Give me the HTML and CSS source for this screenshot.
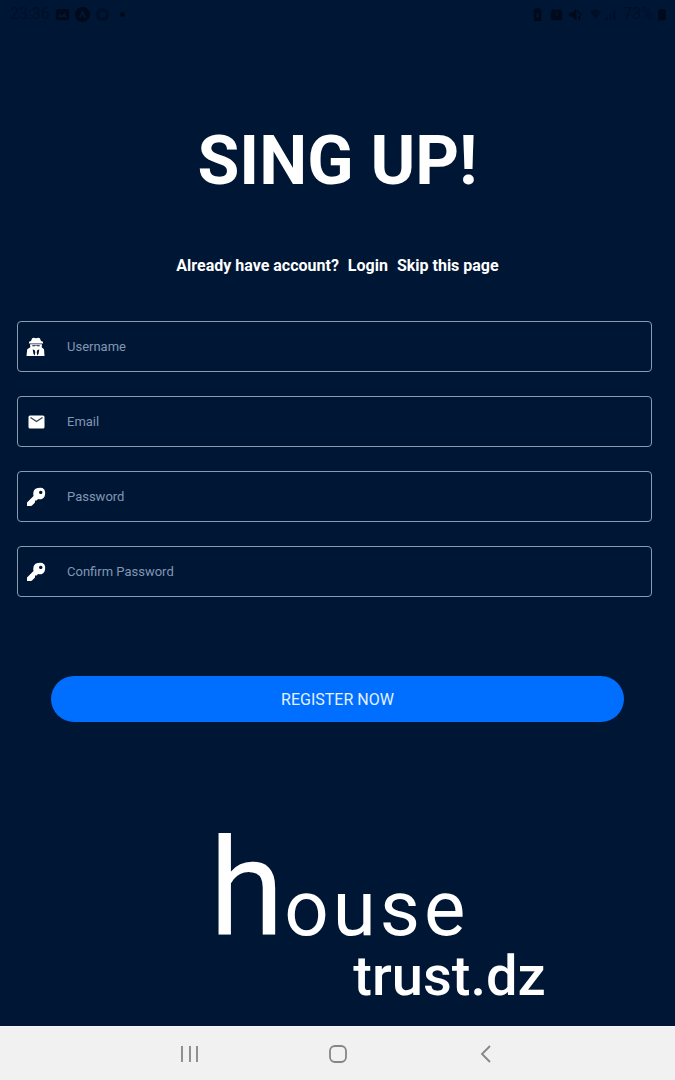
FILE: index.html
```html
<!DOCTYPE html>
<html lang="en">
<head>
<meta charset="utf-8">
<meta name="viewport" content="width=device-width, initial-scale=1">
<title>Sign up</title>
<link rel="stylesheet" href="styles.css">
</head>
<body>
<div class="screen">
  <header class="status">
    <div class="status-group">
      <span>23:36</span>
      <svg class="status-icon" viewBox="0 0 16 16"><path fill-rule="evenodd" d="M3 2h10a2 2 0 0 1 2 2v8a2 2 0 0 1-2 2H3a2 2 0 0 1-2-2V4a2 2 0 0 1 2-2zm0 9h10L10 6 7 9 5 7z"/></svg>
      <svg class="status-icon" viewBox="0 0 16 16"><path fill-rule="evenodd" d="M8 0a8 8 0 1 1 0 16A8 8 0 0 1 8 0zM4 11l2 1 2-4 2 4 2-1-4-8z"/></svg>
      <svg class="status-icon faint" viewBox="0 0 16 16"><path fill-rule="evenodd" d="M8 1a7 7 0 1 1 0 14A7 7 0 0 1 8 1zM5 5v6h6V5z"/></svg>
      <span class="status-dot"></span>
    </div>
    <div class="status-group status-right">
      <svg class="status-icon" viewBox="0 0 16 16"><path fill-rule="evenodd" d="M6 1h4v1h2v13H4V2h2zm0 10h4L8 5z"/></svg>
      <svg class="status-icon" viewBox="0 0 16 16"><path fill-rule="evenodd" d="M4 2l2 1h4l2-1 2 3v8l-2 1H4l-2-1V5zm3 3v4h3V8H8V5z"/></svg>
      <svg class="status-icon" viewBox="0 0 16 16"><path d="M1 6h3l5-4v12l-5-4H1zM10 3l5 5-1 1-4-4zM11 10l2-1v4l-2 1z"/></svg>
      <svg class="status-icon signal" viewBox="0 0 32 16"><path d="M2 5q6-4 12 0l-6 8zM19 10h2v4h-2zM23 7h2v7h-2zM27 3h2v11h-2z"/></svg>
      <span>73%</span>
      <svg class="status-battery" viewBox="0 0 10 16"><path d="M3 2h4v1h2v11H1V3h2z"/></svg>
    </div>
  </header>

  <main class="page">
    <h1 class="title">SING UP!</h1>
    <nav class="links">
      <span>Already have account?</span>
      <a href="#login">Login</a>
      <a href="#skip">Skip this page</a>
    </nav>

    <form class="form">
      <div class="fields">
        <label class="field">
          <svg class="field-icon" viewBox="0 0 20 20"><path fill-rule="evenodd" d="M6 1.500Q7 .3 10 1.300 13 .3 14 1.500L15 4l2 .8v1.700H3V4.800L5 4zM4 7.300h12l-.3 3 2.300 2L18.500 19H.5l.7-6.700 3.100-2zM6.300 8.300v1h2.500l1.200-.8 1.200.8h2.500v-1zM6.700 12.500l.8 4.500 1.300 1.500.5-3.500-.7-2zM13.300 12.500l-1.900.5-.7 2 .5 3.500 1.300-1.500z"/></svg>
          <input class="input" type="text" placeholder="Username" aria-label="Username">
        </label>
        <label class="field">
          <svg class="field-icon" viewBox="0 0 20 20"><path d="M4 3.500h13A1.500 1.500 0 0 1 18.500 5v10a1.500 1.500 0 0 1-1.500 1.500H4A1.500 1.500 0 0 1 2.500 15V5A1.500 1.500 0 0 1 4 3.500z"/><path class="flap" d="M4.500 5.500l6 4 6-4"/></svg>
          <input class="input" type="email" placeholder="Email" aria-label="Email">
        </label>
        <label class="field">
          <svg class="field-icon" viewBox="0 0 20 20"><path fill-rule="evenodd" d="M9.500 1.700Q12.500 .5 16.500 1q2.500 1 2.700 4.500 0 5-3.200 6.500-2 .6-4 0L10.700 13.500H9v2L6 18.500q-1 .6-2.500.5H1v-3.500l6.500-6.500Q6.500 4 9.500 1.700zM14.700 3.700a1.700 1.700 0 1 0 .1 0z"/></svg>
          <input class="input" type="password" placeholder="Password" aria-label="Password">
        </label>
        <label class="field">
          <svg class="field-icon" viewBox="0 0 20 20"><path fill-rule="evenodd" d="M9.500 1.700Q12.500 .5 16.500 1q2.500 1 2.700 4.500 0 5-3.200 6.500-2 .6-4 0L10.700 13.500H9v2L6 18.500q-1 .6-2.500.5H1v-3.500l6.500-6.500Q6.500 4 9.500 1.700zM14.700 3.700a1.700 1.700 0 1 0 .1 0z"/></svg>
          <input class="input" type="password" placeholder="Confirm Password" aria-label="Confirm Password">
        </label>
      </div>
      <button class="register" type="submit">REGISTER NOW</button>
    </form>

    <div class="brand">
      <div class="brand-top"><span class="brand-initial">h</span><span class="brand-rest">ouse</span></div>
      <div class="brand-bottom">trust.dz</div>
    </div>
  </main>

  <footer class="navbar">
    <button class="nav-button" type="button" aria-label="Recent apps"><svg class="nav-icon" viewBox="0 0 20 20"><path d="M2 2v16M10 2v16M17 2v16"/></svg></button>
    <button class="nav-button" type="button" aria-label="Home"><svg class="nav-icon" viewBox="0 0 20 20"><rect x="2" y="2" width="16" height="16" rx="5"/></svg></button>
    <button class="nav-button" type="button" aria-label="Back"><svg class="nav-icon" viewBox="0 0 20 20"><path d="M14 2L6 10l8 8"/></svg></button>
  </footer>
</div>
</body>
</html>
```
FILE: styles.css
```css
* {
  box-sizing: border-box;
}

body {
  margin: 0;
  background: #001635;
  color: #fff;
  font-family: Roboto, "Liberation Sans", sans-serif;
}

.screen {
  display: flex;
  flex-direction: column;
  min-height: 100vh;
}

.status {
  display: flex;
  justify-content: space-between;
  height: 28px;
  padding: 0 8px 0 10px;
  color: #000f28;
  font-size: 16px;
  line-height: 28px;
}

.status-group {
  display: flex;
  align-items: center;
  gap: 5px;
}

.status-right {
  gap: 4px;
}

.status-icon {
  width: 15px;
  height: 15px;
  fill: #000a1a;
}

.faint,
.signal {
  fill: #000f28;
}

.signal {
  width: 32px;
}

.status-battery {
  width: 10px;
  height: 15px;
  fill: #000a1a;
}

.status-dot {
  width: 5px;
  height: 5px;
  margin-left: 5px;
  border-radius: 50%;
  background: #000a1a;
}

.page {
  flex: 1;
  padding-top: 93px;
}

.title {
  margin: 0;
  font-size: 68px;
  line-height: 80px;
  font-weight: 700;
  text-align: center;
}

.links {
  display: flex;
  justify-content: center;
  gap: 9px;
  margin-top: 55px;
  font-size: 16px;
  line-height: 20px;
  font-weight: 700;
}

.links a {
  color: inherit;
  text-decoration: none;
}

.form {
  margin-top: 45px;
}

.fields {
  display: grid;
  gap: 24px;
  padding: 0 23px 0 17px;
}

.field {
  display: flex;
  align-items: center;
  gap: 21px;
  height: 51px;
  padding-left: 8px;
  border: 1px solid #8d9bb0;
  border-radius: 4px;
}

.field-icon {
  flex: none;
  width: 20px;
  height: 20px;
  fill: #fff;
}

.flap {
  fill: none;
  stroke: #33445c;
  stroke-width: 1.4;
}

.input {
  flex: 1;
  min-width: 0;
  height: 100%;
  padding: 0;
  border: 0;
  outline: 0;
  background: transparent;
  color: #fff;
  font: 13px/16px Roboto, "Liberation Sans", sans-serif;
}

.input::placeholder {
  color: #8096b4;
  opacity: 1;
}

.register {
  display: block;
  width: 85%;
  height: 46px;
  margin: 79px auto 0;
  padding: 2px 0 0;
  border: 0;
  border-radius: 23px;
  background: #006eff;
  color: #e4f1ff;
  font: 16px/20px Roboto, "Liberation Sans", sans-serif;
}

.brand {
  display: grid;
  justify-content: center;
  margin-top: 107px;
  padding-left: 80px;
}

.brand-top {
  display: flex;
  align-items: baseline;
}

.brand-initial {
  font-size: 136px;
  line-height: 120px;
}

.brand-rest {
  font-size: 78px;
  line-height: 80px;
  letter-spacing: 4px;
}

.brand-bottom {
  margin-left: 144px;
  font-size: 56px;
  line-height: 54px;
  font-weight: 500;
}

.navbar {
  display: flex;
  flex: none;
  justify-content: center;
  align-items: center;
  gap: 124px;
  height: 54px;
  background: #f1f1f1;
  border-top: 1px solid #f8f8fc;
}

.nav-button {
  display: flex;
  padding: 2px;
  border: 0;
  background: transparent;
}

.nav-icon {
  width: 20px;
  height: 20px;
  fill: none;
  stroke: #858585;
  stroke-width: 1.8;
}
```
